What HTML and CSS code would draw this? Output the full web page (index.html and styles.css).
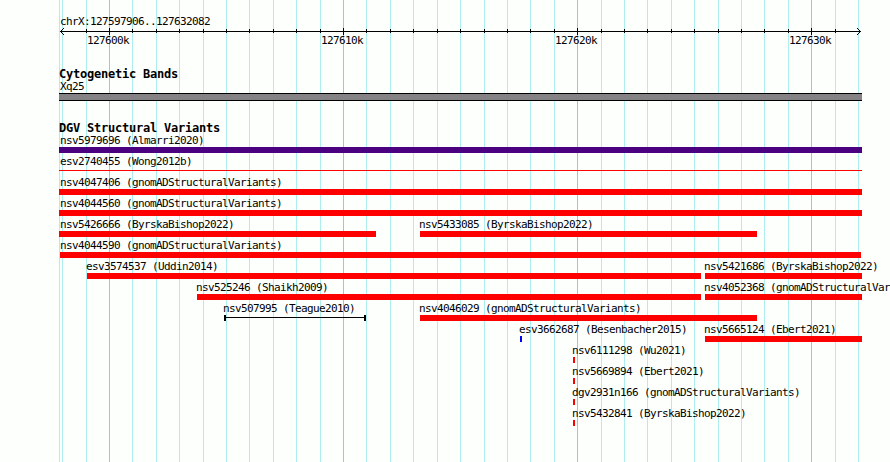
FILE: index.html
```
<!DOCTYPE html>
<html lang="en">
<head>
    <meta charset="UTF-8">
    <meta name="viewport" content="width=device-width, initial-scale=1.0">
    <title>chrX:127597906..127632082</title>
    <link rel="stylesheet" href="styles.css">
</head>
<body>
    <div class="browser">
        <svg class="grid" id="grid" width="890" height="462" shape-rendering="crispEdges"></svg>

        <div class="ruler">
            <div class="region">chrX:127597906..127632082</div>
            <svg class="axis" id="axis" width="890" height="9" shape-rendering="crispEdges">
                <path class="axis-line" d="M60 4.5H861"/>
                <path class="arrow" d="M63 1h1v1h-1zM62 2h1v1h-1zM61 3h1v1h-1zM60 4h1v1h-1zM61 5h1v1h-1zM62 6h1v1h-1zM63 7h1v1h-1z"/>
                <path class="arrow" d="M857 1h1v1h-1zM858 2h1v1h-1zM859 3h1v1h-1zM860 4h1v1h-1zM859 5h1v1h-1zM858 6h1v1h-1zM857 7h1v1h-1z"/>
            </svg>
            <div class="scale">
                <span>127600k</span>
                <span>127610k</span>
                <span>127620k</span>
                <span>127630k</span>
            </div>
        </div>

        <div class="track cyto">
            <h2>Cytogenetic Bands</h2>
            <div class="label edge">Xq25</div>
            <div class="band"></div>
        </div>

        <div class="track variants">
            <h2>DGV Structural Variants</h2>
            <div id="rows"></div>
        </div>
    </div>

    <script>
        const LEFT = 59;
        const gridLines = [59, 62, 86, 109, 132, 156, 179, 203, 226, 249, 273, 296, 320, 343, 366, 390, 413, 437,
            460, 484, 507, 530, 554, 577, 601, 624, 647, 671, 694, 718, 741, 764, 788, 811, 835, 858];
        const majors = [109, 343, 577, 811];

        // name, start, end, type
        const rows = [
            [['nsv5979696 (Almarri2020)', 59, 862, 'complex']],
            [['esv2740455 (Wong2012b)', 59, 862, 'thin']],
            [['nsv4047406 (gnomADStructuralVariants)', 59, 862, 'loss']],
            [['nsv4044560 (gnomADStructuralVariants)', 59, 862, 'loss']],
            [['nsv5426666 (ByrskaBishop2022)', 59, 376, 'loss'], ['nsv5433085 (ByrskaBishop2022)', 420, 757, 'loss']],
            [['nsv4044590 (gnomADStructuralVariants)', 60, 861, 'loss']],
            [['esv3574537 (Uddin2014)', 87, 701, 'loss'], ['nsv5421686 (ByrskaBishop2022)', 705, 862, 'loss']],
            [['nsv525246 (Shaikh2009)', 197, 701, 'loss'], ['nsv4052368 (gnomADStructuralVariants)', 705, 862, 'loss']],
            [['nsv507995 (Teague2010)', 224, 366, 'span'], ['nsv4046029 (gnomADStructuralVariants)', 420, 757, 'loss']],
            [['esv3662687 (Besenbacher2015)', 520, 522, 'gain'], ['nsv5665124 (Ebert2021)', 705, 862, 'loss']],
            [['nsv6111298 (Wu2021)', 573, 575, 'loss']],
            [['nsv5669894 (Ebert2021)', 573, 575, 'loss']],
            [['dgv2931n166 (gnomADStructuralVariants)', 573, 575, 'loss']],
            [['nsv5432841 (ByrskaBishop2022)', 573, 575, 'loss']]
        ];

        // Grid lines and axis ticks
        function addRect(parent, cls, x, y, height) {
            const rect = document.createElementNS('http://www.w3.org/2000/svg', 'rect');
            rect.setAttribute('class', cls);
            rect.setAttribute('x', x);
            rect.setAttribute('y', y);
            rect.setAttribute('width', 1);
            rect.setAttribute('height', height);
            parent.appendChild(rect);
        }

        const grid = document.getElementById('grid');
        const axis = document.getElementById('axis');
        gridLines.forEach(x => {
            const major = majors.includes(x);
            addRect(grid, major ? 'major' : 'minor', x, 0, 462);
            if (major) {
                addRect(axis, 'tick', x, 1, 7);
            } else if (x > 62 && x < 858) {
                addRect(axis, 'tick', x, 2, 4);
            }
        });

        // Variant rows
        const rowsEl = document.getElementById('rows');
        rows.forEach(features => {
            const row = document.createElement('div');
            row.className = 'row';
            let pos = LEFT;
            features.forEach(([name, start, end, type]) => {
                const feature = document.createElement('div');
                feature.className = 'feature';
                feature.style.marginLeft = (start - pos) + 'px';
                feature.style.width = (end - start) + 'px';

                const label = document.createElement('div');
                label.className = start === 59 ? 'label edge' : start === 60 ? 'label flush' : 'label';
                label.textContent = name;

                const bar = document.createElement('div');
                bar.className = 'bar ' + type;

                feature.append(label, bar);
                row.appendChild(feature);
                pos = end;
            });
            rowsEl.appendChild(row);
        });
    </script>
</body>
</html>
```
FILE: styles.css
```
body {
    margin: 0;
    background-color: #fdfffc;
    color: #000;
    font-family: "DejaVu Sans Mono", "Liberation Mono", monospace;
    font-size: 11px;
    line-height: 13px;
    letter-spacing: -0.62px;
    overflow: hidden;
}

.browser {
    position: relative;
    box-sizing: border-box;
    width: 890px;
    height: 462px;
    padding: 15px 0 0 59px;
    overflow: hidden;
}

/* grid runs behind all the tracks */
.grid {
    position: absolute;
    top: 0;
    left: 0;
    z-index: -1;
}

.minor {
    fill: #afeeee;
}

.major {
    fill: #87ceeb;
}

.ruler {
    height: 52px;
}

.region {
    height: 12px;
    padding-left: 1px;
}

.axis {
    display: block;
    margin-left: -59px;
}

.axis-line {
    stroke: #000;
}

.arrow,
.tick {
    fill: #000;
}

.scale {
    display: flex;
    margin-top: -2px;
    padding-left: 28px;
}

.scale span {
    flex: none;
    width: 234px;
}

.scale span:last-child {
    width: auto;
}

.track h2 {
    margin: 0;
    height: 13px;
    font-size: 12px;
    font-weight: bold;
    line-height: 14px;
    letter-spacing: -0.225px;
}

.cyto {
    height: 54px;
}

.band {
    box-sizing: border-box;
    width: 803px;
    height: 8px;
    background-color: #848284;
    border-top: 1px solid #000;
    border-bottom: 1px solid #000;
}

.row {
    display: flex;
    height: 21px;
}

.feature {
    flex: none;
}

.label {
    height: 13px;
    margin-left: -1px;
    white-space: nowrap;
}

.label.edge {
    margin-left: 1px;
}

.label.flush {
    margin-left: 0;
}

.bar {
    box-sizing: border-box;
    height: 6px;
}

.complex {
    background-color: #4b0082;
}

.loss {
    background-color: #ff0000;
}

.gain {
    background-color: #0000ff;
}

.thin {
    height: 1px;
    margin-top: 2px;
    background-color: #ff0000;
}

.span {
    border: solid #000;
    border-width: 0 2px;
    background: linear-gradient(#000, #000) 0 2px / 100% 1px no-repeat;
}
```
